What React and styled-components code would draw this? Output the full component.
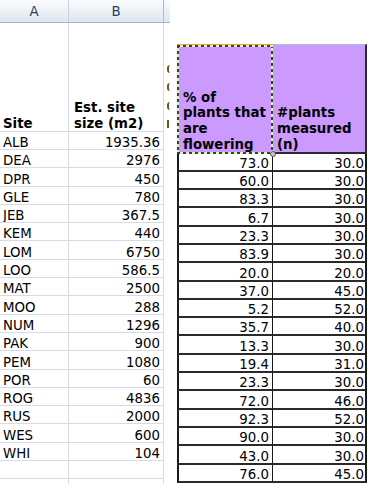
import React from 'react';
import styled, { createGlobalStyle } from 'styled-components';

const ROW = 18.3;

const Global = createGlobalStyle`
  html, body { margin: 0; padding: 0; background: #fff; }
  body {
    font-family: "DejaVu Sans", Verdana, sans-serif;
    font-size: 13.33px;
    color: #000;
  }
`;

const Page = styled.div`
  width: 370px;
  height: 484px;
  overflow: hidden;
  display: flex;
  align-items: flex-start;
`;

/* ---------- left: worksheet fragment ---------- */
const Sheet = styled.div`
  width: 170px;
  flex: none;
  display: flex;
  flex-direction: column;
`;

const HeaderBand = styled.div`
  display: grid;
  grid-template-columns: 69px 95px 6px;
  height: 23px;
  box-sizing: border-box;
  border-bottom: 1px solid #9fb5cd;
  background: linear-gradient(#fafbfd 0%, #eef2f7 45%, #dfe6ef 100%);
`;

const ColLabel = styled.div`
  display: flex;
  align-items: center;
  justify-content: center;
  box-sizing: border-box;
  border-right: ${p => (p.$none ? 'none' : p.$strong ? '1px solid #a9b9cc' : '1px solid #c6d2df')};
  color: #2a4060;
  font-size: 13.33px;
  line-height: 1;
  padding-top: 1px;
`;

const SheetRow = styled.div`
  display: grid;
  grid-template-columns: 69px 95px 6px;
  height: ${p => p.$h}px;
`;

const Cell = styled.div`
  box-sizing: border-box;
  display: flex;
  flex-direction: column;
  justify-content: flex-end;
  align-items: ${p => (p.$num ? 'flex-end' : 'flex-start')};
  border-right: 1px solid #d5dce8;
  border-bottom: 1px solid #d5dce8;
  padding-left: ${p => p.$pl ?? 3}px;
  padding-right: ${p => (p.$num ? 3 : 0)}px;
  white-space: nowrap;
  overflow: hidden;
  line-height: 13px;
`;

/* column C: only the left edges of its clipped header glyphs show */
const ClipCell = styled.div`
  display: flex;
  flex-direction: column;
  justify-content: flex-end;
  gap: 10.3px;
  padding: 0 0 3.7px 3px;
  overflow: hidden;
`;

const Sliver = styled.span`
  display: block;
  width: 3px;
  height: 8px;
  box-sizing: border-box;
  border-left: 2px solid #7a5222;
  border-radius: ${p => (p.$straight ? '0' : '3px 0 0 3px')};
`;

const HeadText = styled.div`
  font-weight: 700;
  line-height: ${ROW}px;
  margin-bottom: -2.6px;
  white-space: nowrap;
`;

/* ---------- right: pasted table ---------- */
const Table = styled.div`
  position: relative;
  margin: 44px 0 0 7px;
  width: 190px;
  flex: none;
  display: flex;
  flex-direction: column;
`;

const TRow = styled.div`
  display: grid;
  grid-template-columns: 96px 94px;
  height: ${p => p.$h}px;
`;

const ants = (dir) =>
  `repeating-linear-gradient(${dir}, #2f4a1e 0 3px, #e2ebd2 3px 6px)`;

const HeadCell = styled.div`
  box-sizing: border-box;
  display: flex;
  flex-direction: column;
  justify-content: flex-end;
  align-items: flex-start;
  overflow: hidden;
  background-color: #cc99ff;
  ${p =>
    p.$selected
      ? `
    border-top: 1px solid #f2a23c;
    padding: 0 3px 2px 6px;
    background:
      ${ants('90deg')} left top / 100% 2px no-repeat,
      ${ants('90deg')} left bottom / 100% 2px no-repeat,
      ${ants('180deg')} left top / 2px 100% no-repeat,
      ${ants('180deg')} right top / 2px 100% no-repeat,
      #cc99ff;
  `
      : `
    border-top: 1px solid #aabfd8;
    border-right: 2px solid #2a2a2a;
    border-bottom: 2px solid #2a2a2a;
    padding: 0 2px 0 4px;
  `}
`;

const TCell = styled.div`
  box-sizing: border-box;
  display: flex;
  align-items: flex-end;
  justify-content: flex-end;
  background: #fff;
  border-bottom: 2px solid #2a2a2a;
  border-left: ${p => (p.$first ? '2px solid #1a1a1a' : 'none')};
  border-right: ${p => (p.$first ? '1px solid #1a1a1a' : '2px solid #1a1a1a')};
  padding-right: ${p => (p.$first ? 3 : 1)}px;
  line-height: 13px;
  white-space: nowrap;
`;

const Handle = styled.span`
  position: absolute;
  left: 93px;
  top: 107px;
  width: 4px;
  height: 4px;
  border-radius: 50%;
  border: 1px solid #555;
  background: #c9c9c9;
`;

const sites = [
  ['ALB', '1935.36'], ['DEA', '2976'], ['DPR', '450'], ['GLE', '780'],
  ['JEB', '367.5'], ['KEM', '440'], ['LOM', '6750'], ['LOO', '586.5'],
  ['MAT', '2500'], ['MOO', '288'], ['NUM', '1296'], ['PAK', '900'],
  ['PEM', '1080'], ['POR', '60'], ['ROG', '4836'], ['RUS', '2000'],
  ['WES', '600'], ['WHI', '104'], ['', ''], ['', ''],
];

const measures = [
  ['73.0', '30.0'], ['60.0', '30.0'], ['83.3', '30.0'], ['6.7', '30.0'],
  ['23.3', '30.0'], ['83.9', '30.0'], ['20.0', '20.0'], ['37.0', '45.0'],
  ['5.2', '52.0'], ['35.7', '40.0'], ['13.3', '30.0'], ['19.4', '31.0'],
  ['23.3', '30.0'], ['72.0', '46.0'], ['92.3', '52.0'], ['90.0', '30.0'],
  ['43.0', '30.0'], ['76.0', '45.0'],
];

export default function App() {
  return (
    <>
      <Global />
      <Page>
        <Sheet>
          <HeaderBand>
            <ColLabel>A</ColLabel>
            <ColLabel $strong>B</ColLabel>
            <ColLabel $none />
          </HeaderBand>
          <SheetRow $h={108.7}>
            <Cell>
              <HeadText>Site</HeadText>
            </Cell>
            <Cell $pl={5}>
              <HeadText>Est. site</HeadText>
              <HeadText>size (m2)</HeadText>
            </Cell>
            <ClipCell>
              <Sliver />
              <Sliver />
              <Sliver />
              <Sliver $straight />
            </ClipCell>
          </SheetRow>
          {sites.map(([s, v], i) => (
            <SheetRow key={i} $h={ROW}>
              <Cell>{s}</Cell>
              <Cell $num>{v}</Cell>
              <div />
            </SheetRow>
          ))}
        </Sheet>

        <Table>
          <TRow $h={109.5}>
            <HeadCell $selected>
              <HeadText>% of</HeadText>
              <HeadText>plants that</HeadText>
              <HeadText>are</HeadText>
              <HeadText>flowering</HeadText>
            </HeadCell>
            <HeadCell>
              <HeadText>#plants</HeadText>
              <HeadText>measured</HeadText>
              <HeadText>(n)</HeadText>
            </HeadCell>
          </TRow>
          {measures.map(([a, b], i) => (
            <TRow key={i} $h={ROW}>
              <TCell $first>{a}</TCell>
              <TCell>{b}</TCell>
            </TRow>
          ))}
          <Handle />
        </Table>
      </Page>
    </>
  );
}
